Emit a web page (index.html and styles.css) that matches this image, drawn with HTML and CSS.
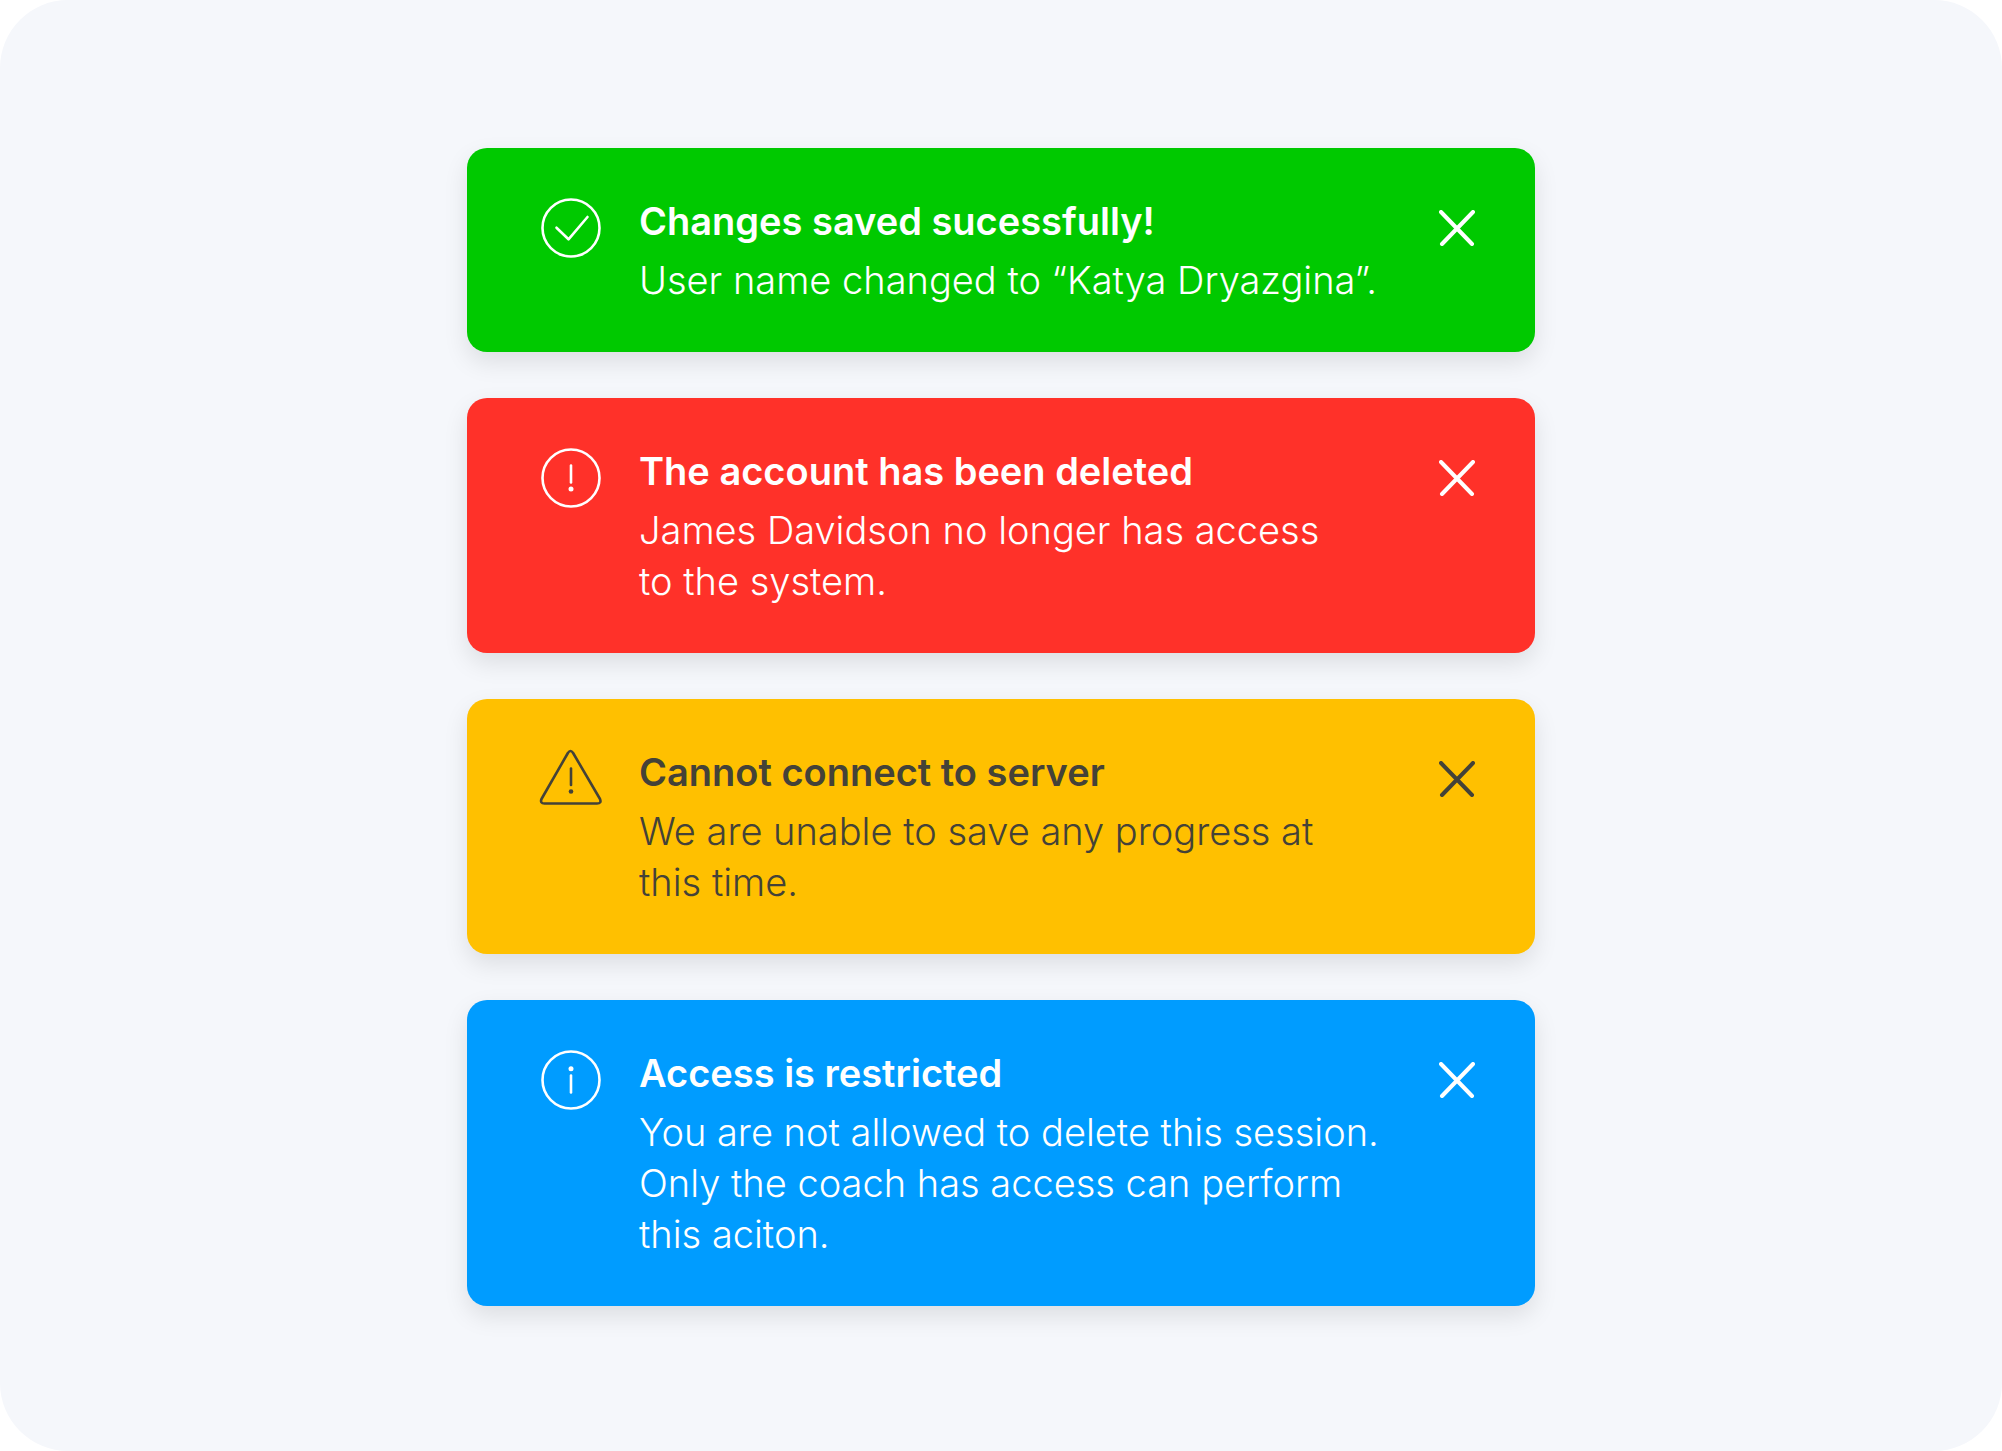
FILE: index.html
```html
<!DOCTYPE html>
<html lang="en">
<head>
    <meta charset="UTF-8">
    <title>Notifications</title>
    <link rel="stylesheet" href="styles.css">
</head>
<body>
    <main class="stage">
        <!-- Success -->
        <div class="alert success" role="status">
            <svg class="icon" viewBox="0 0 64 64">
                <circle cx="32" cy="32" r="28.5"/>
                <path d="M17.5 31.7L29.5 43.3L48.5 21"/>
            </svg>
            <div class="text">
                <h2>Changes saved sucessfully!</h2>
                <p>User name changed to “Katya Dryazgina”.</p>
            </div>
            <button class="close" type="button" aria-label="Close">
                <svg viewBox="0 0 36 36"><path d="M2 2L33 34M34 2L3 34"/></svg>
            </button>
        </div>

        <!-- Error -->
        <div class="alert error" role="alert">
            <svg class="icon" viewBox="0 0 64 64">
                <circle cx="32" cy="32" r="28.5"/>
                <path d="M32 19.5V36.5"/>
                <circle class="dot" cx="32" cy="43" r="2.5"/>
            </svg>
            <div class="text">
                <h2>The account has been deleted</h2>
                <p>James Davidson no longer has access<br>to the system.</p>
            </div>
            <button class="close" type="button" aria-label="Close">
                <svg viewBox="0 0 36 36"><path d="M2 2L33 34M34 2L3 34"/></svg>
            </button>
        </div>

        <!-- Warning -->
        <div class="alert warning" role="alert">
            <svg class="icon" viewBox="0 0 64 64">
                <path d="M28.9 6Q31.5 2.1 34.1 6L61 52Q62.8 56.5 58 56.5H5.5Q.8 56.5 2.5 52Z"/>
                <path d="M32 21.5V38"/>
                <circle class="dot" cx="32" cy="44.5" r="2.3"/>
            </svg>
            <div class="text">
                <h2>Cannot connect to server</h2>
                <p>We are unable to save any progress at<br>this time.</p>
            </div>
            <button class="close" type="button" aria-label="Close">
                <svg viewBox="0 0 36 36"><path d="M2 2L33 34M34 2L3 34"/></svg>
            </button>
        </div>

        <!-- Info -->
        <div class="alert info" role="status">
            <svg class="icon" viewBox="0 0 64 64">
                <circle cx="32" cy="32" r="28.5"/>
                <circle class="dot" cx="32" cy="20.7" r="2.5"/>
                <path d="M32 27.5V44.5"/>
            </svg>
            <div class="text">
                <h2>Access is restricted</h2>
                <p>You are not allowed to delete this session.<br>Only the coach has access can perform<br>this aciton.</p>
            </div>
            <button class="close" type="button" aria-label="Close">
                <svg viewBox="0 0 36 36"><path d="M2 2L33 34M34 2L3 34"/></svg>
            </button>
        </div>
    </main>
</body>
</html>
```
FILE: styles.css
```css
* { box-sizing: border-box; }
body {
    margin: 0;
    background: white;
    font-family: Inter, "Liberation Sans", sans-serif;
}
.stage {
    display: flex;
    flex-direction: column;
    align-items: center;
    gap: 46px;
    min-height: 100vh;
    padding: 148px 24px 140px;
    background: #f5f7fb;
    border-radius: 68px;
}
.alert {
    display: flex;
    align-items: flex-start;
    width: 100%;
    max-width: 1068px;
    padding: 48px 60px 46px 72px;
    border-radius: 20px;
    color: white;
    box-shadow: 0 10px 24px rgba(0,0,0,0.1);
}
.success { background: #00c900; }
.error { background: #ff3129; }
.warning { background: #ffc000; color: #444238; }
.info { background: #009cff; }
.icon {
    flex: none;
    width: 64px;
    height: 64px;
    margin-right: 36px;
    fill: none;
    stroke: currentColor;
    stroke-width: 2.6;
    stroke-linecap: round;
    stroke-linejoin: round;
}
.icon .dot {
    fill: currentColor;
    stroke: none;
}
.text { flex: 1; }
h2, p {
    margin: 0;
    font-size: 38px;
    line-height: 51px;
}
h2 {
    margin-bottom: 8px;
    font-weight: 600;
}
p { font-weight: 300; }
.close {
    flex: none;
    margin-top: 14px;
    padding: 0;
    border: none;
    background: none;
    color: inherit;
    cursor: pointer;
}
.close svg {
    display: block;
    width: 36px;
    height: 36px;
    fill: none;
    stroke: currentColor;
    stroke-width: 4;
    stroke-linecap: round;
}
```
